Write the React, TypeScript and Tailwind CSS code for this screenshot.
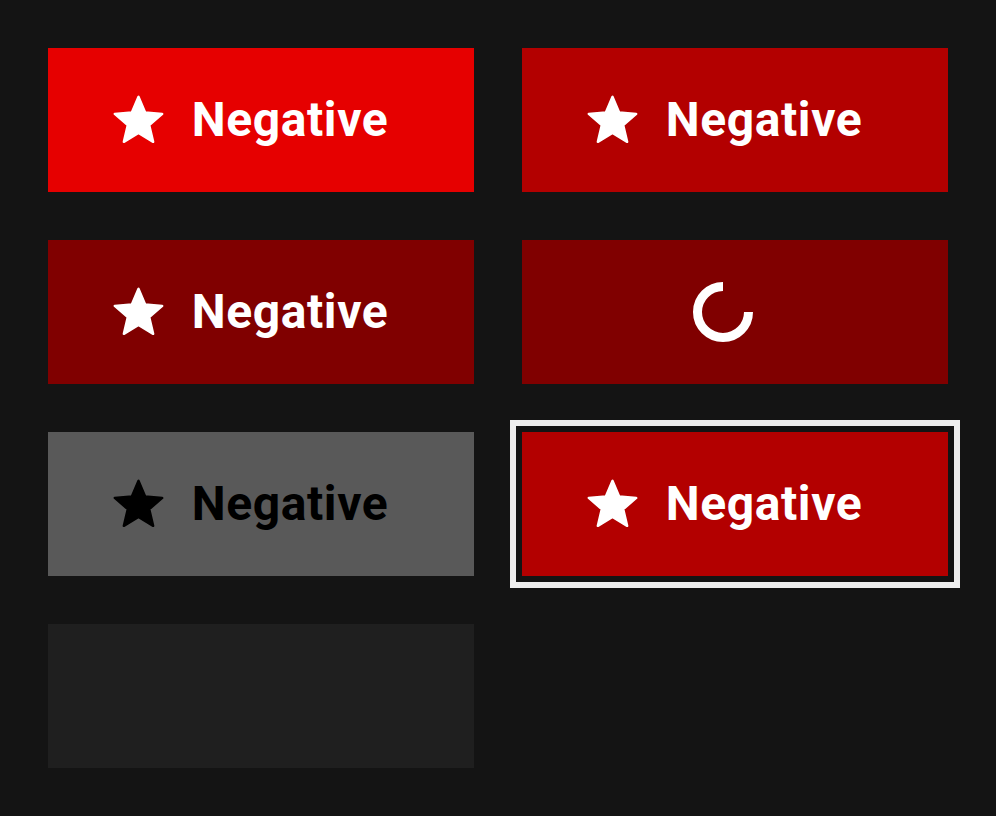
import React from "react";

const Star = ({ color }: { color: string }) => (
  <svg width="57" height="57" viewBox="0 0 24 24" className="shrink-0">
    <path
      d="M12 17.27L18.18 21l-1.64-7.03L22 9.24l-7.19-.61L12 2 9.19 8.63 2 9.24l5.46 4.73L5.82 21z"
      fill={color}
      stroke={color}
      strokeWidth="1"
      strokeLinejoin="round"
    />
  </svg>
);

const Label = ({ dark }: { dark?: boolean }) => (
  <span
    className={`text-[48px] font-bold leading-none tracking-[0.6px] ${dark ? "text-black" : "text-white"}`}
    style={{ fontFamily: "Roboto, sans-serif" }}
  >
    Negative
  </span>
);

const Btn = ({ bg, children }: { bg: string; children?: React.ReactNode }) => (
  <div className={`h-[144px] w-[426px] flex items-center justify-center gap-[25px] pr-[24px] ${bg}`}>
    {children}
  </div>
);

export default function App() {
  return (
    <div className="w-[996px] h-[816px] bg-[#141414] p-[48px]">
      <div className="grid grid-cols-[426px_426px] gap-[48px]">
        <Btn bg="bg-[#e60000]">
          <Star color="#fff" />
          <Label />
        </Btn>
        <Btn bg="bg-[#b30000]">
          <Star color="#fff" />
          <Label />
        </Btn>
        <Btn bg="bg-[#800000]">
          <Star color="#fff" />
          <Label />
        </Btn>
        <div className="h-[144px] w-[426px] flex items-center justify-center pr-[24px] bg-[#800000]">
          <svg width="62" height="62" viewBox="0 0 62 62">
            <path
              d="M31 5.5 A25.5 25.5 0 1 0 56.5 31"
              fill="none"
              stroke="#fff"
              strokeWidth="9"
            />
          </svg>
        </div>
        <Btn bg="bg-[#595959]">
          <Star color="#000" />
          <Label dark />
        </Btn>
        <div className="outline-[6px] outline-solid outline-[#eeeeee] outline-offset-[6px]">
          <Btn bg="bg-[#b30000]">
            <Star color="#fff" />
            <Label />
          </Btn>
        </div>
        <div className="h-[144px] w-[426px] bg-[#1f1f1f]" />
      </div>
    </div>
  );
}
